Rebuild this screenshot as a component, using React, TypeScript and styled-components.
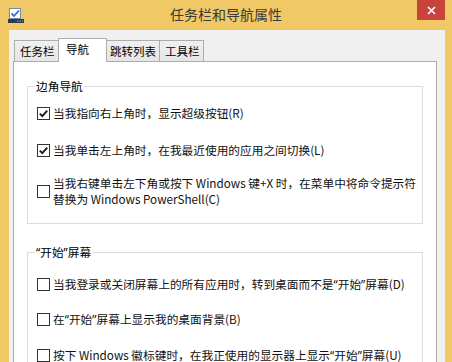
import React from "react";
import styled, { createGlobalStyle } from "styled-components";

const Global = createGlobalStyle`
  html, body { margin: 0; padding: 0; background: #f0c866; }
  body { font-family: "Noto Sans CJK SC", "Noto Sans", sans-serif; }
`;

const Window = styled.div`
  width: 452px;
  height: 362px;
  background: #f0c866;
  display: flex;
  flex-direction: column;
  overflow: hidden;
  font-family: "Noto Sans CJK SC", "Noto Sans", sans-serif;
  color: #000;
`;

const TitleBar = styled.div`
  height: 30px;
  flex: none;
  display: grid;
  grid-template-columns: 1fr auto 1fr;
  align-items: center;
`;

const IconCell = styled.div`
  padding-left: 8px;
  display: flex;
  align-items: center;
`;

const Title = styled.div`
  font-size: 14px;
  line-height: 18px;
  color: #3a3a3a;
  margin-top: -2px;
`;

const CloseButton = styled.div`
  justify-self: end;
  align-self: start;
  margin-right: 7px;
  width: 28px;
  height: 20px;
  background: #c7433b;
  display: flex;
  align-items: center;
  justify-content: center;
`;

const Body = styled.div`
  flex: 1;
  min-height: 0;
  margin: 0 7px 0 9px;
  background: #f0f0f0;
  padding: 8px 8px 0 4px;
  display: flex;
  flex-direction: column;
`;

const TabStrip = styled.div`
  height: 23px;
  flex: none;
  display: flex;
  align-items: flex-end;
  padding-left: 1px;
`;

const Tab = styled.div<{ $w: number; $active?: boolean }>`
  box-sizing: border-box;
  width: ${(p) => (p.$active ? p.$w + 4 : p.$w)}px;
  height: ${(p) => (p.$active ? 24 : 21)}px;
  margin: 0 ${(p) => (p.$active ? -2 : 0)}px ${(p) => (p.$active ? -1 : 0)}px;
  border: 1px solid #acacac;
  border-bottom: 0;
  background: ${(p) =>
    p.$active ? "#ffffff" : "linear-gradient(#f0f0f0, #e5e5e5)"};
  position: relative;
  z-index: ${(p) => (p.$active ? 2 : 1)};
  padding-left: ${(p) => (p.$active ? 7 : 5)}px;
  font-size: 11.5px;
  line-height: ${(p) => (p.$active ? 20 : 21)}px;
  white-space: nowrap;
  & + & {
    margin-left: ${(p) => (p.$active ? -2 : -1)}px;
  }
`;

const Panel = styled.div`
  flex: 1;
  background: #ffffff;
  border: 1px solid #acacac;
  padding: 16px 13px 0 13px;
`;

const Group = styled.fieldset<{ $pb: number; $mt?: number }>`
  margin: ${(p) => p.$mt ?? 0}px 0 0 0;
  border: 1px solid #dcdcdc;
  padding: 0 0 ${(p) => p.$pb}px 0;
  min-width: 0;
`;

const Legend = styled.legend`
  margin-left: 7px;
  padding: 0 1px;
  font-size: 11.7px;
  line-height: 16px;
  color: #000;
`;

const Row = styled.label<{ $mt: number }>`
  display: flex;
  align-items: center;
  gap: 3px;
  margin: ${(p) => p.$mt}px 0 0 9px;
`;

const Box = styled.span`
  box-sizing: border-box;
  width: 13px;
  height: 13px;
  flex: none;
  border: 1px solid #333333;
  background: #ffffff;
  display: flex;
  align-items: center;
  justify-content: center;
`;

const Text = styled.span`
  font-size: 11.7px;
  line-height: 16px;
  white-space: nowrap;
  color: #111;
`;

const Q = styled.span`
  font-family: "Noto Sans", sans-serif;
`;

const Check: React.FC<{ checked?: boolean }> = ({ checked }) => (
  <Box>
    {checked && (
      <svg width="11" height="11" viewBox="0 0 11 11">
        <path
          d="M1.8 5.6 L4.3 8.1 L9.2 2.6"
          fill="none"
          stroke="#1a1a1a"
          strokeWidth="1.9"
        />
      </svg>
    )}
  </Box>
);

const AppIcon = () => (
  <svg width="16" height="15" viewBox="0 0 16 15">
    <rect x="1.5" y="0.5" width="11" height="10" fill="#ffffff" stroke="#7a8aa0" />
    <path d="M3.5 5.5 L6 8 L11 2.5" fill="none" stroke="#2a72c8" strokeWidth="1.8" />
    <rect x="0" y="11" width="16" height="4" fill="#2e3a4e" />
    <rect x="9" y="12.5" width="1.5" height="1.2" fill="#5fa0e0" />
    <rect x="11.5" y="12.5" width="1.5" height="1.2" fill="#5fa0e0" />
    <rect x="14" y="12.5" width="1.2" height="1.2" fill="#5fa0e0" />
  </svg>
);

export default function App() {
  return (
    <>
      <Global />
      <Window>
        <TitleBar>
          <IconCell>
            <AppIcon />
          </IconCell>
          <Title>任务栏和导航属性</Title>
          <CloseButton>
            <svg width="9" height="9" viewBox="0 0 9 9">
              <path d="M1 1 L8 8 M8 1 L1 8" stroke="#ffffff" strokeWidth="1.6" />
            </svg>
          </CloseButton>
        </TitleBar>
        <Body>
          <TabStrip>
            <Tab $w={45}>任务栏</Tab>
            <Tab $w={45} $active>
              导航
            </Tab>
            <Tab $w={56}>跳转列表</Tab>
            <Tab $w={45}>工具栏</Tab>
          </TabStrip>
          <Panel>
            <Group $pb={16}>
              <Legend>边角导航</Legend>
              <Row $mt={11}>
                <Check checked />
                <Text>当我指向右上角时，显示超级按钮(R)</Text>
              </Row>
              <Row $mt={21}>
                <Check checked />
                <Text>当我单击左上角时，在我最近使用的应用之间切换(L)</Text>
              </Row>
              <Row $mt={17}>
                <Check />
                <Text>
                  当我右键单击左下角或按下 Windows 键+X 时，在菜单中将命令提示符
                  <br />
                  替换为 Windows PowerShell(C)
                </Text>
              </Row>
            </Group>
            <Group $pb={16} $mt={20}>
              <Legend>
                <Q>“</Q>开始<Q>”</Q>屏幕
              </Legend>
              <Row $mt={16}>
                <Check />
                <Text>
                  当我登录或关闭屏幕上的所有应用时，转到桌面而不是<Q>“</Q>开始<Q>”</Q>屏幕(D)
                </Text>
              </Row>
              <Row $mt={19}>
                <Check />
                <Text>
                  在<Q>“</Q>开始<Q>”</Q>屏幕上显示我的桌面背景(B)
                </Text>
              </Row>
              <Row $mt={20}>
                <Check />
                <Text>
                  按下 Windows 徽标键时，在我正使用的显示器上显示<Q>“</Q>开始<Q>”</Q>屏幕(U)
                </Text>
              </Row>
            </Group>
          </Panel>
        </Body>
      </Window>
    </>
  );
}
